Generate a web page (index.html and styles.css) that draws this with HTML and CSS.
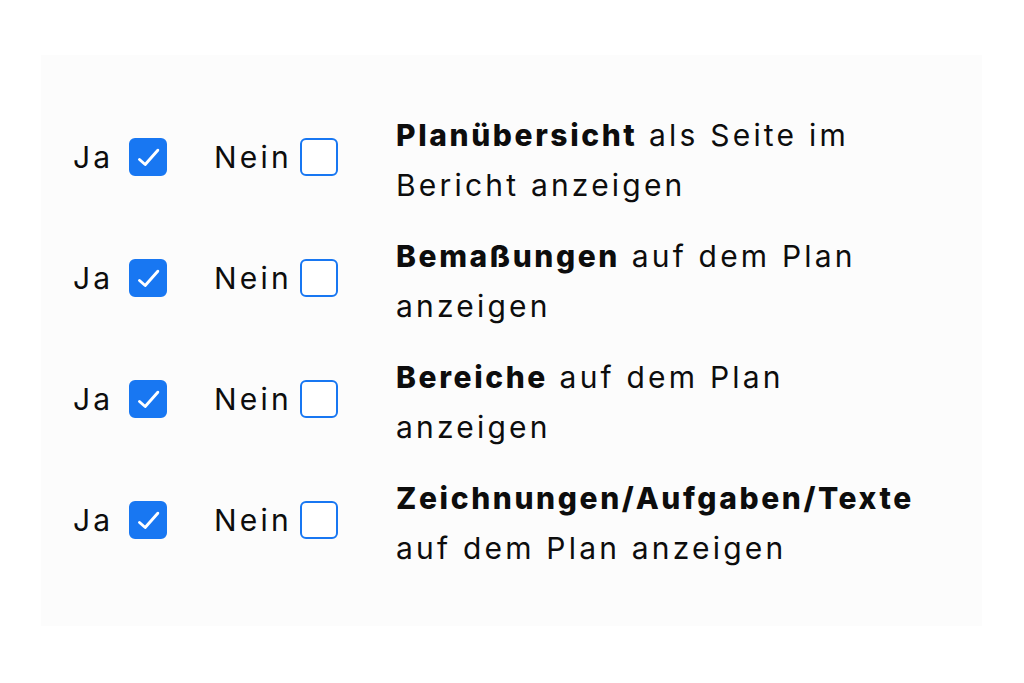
FILE: index.html
```html
<!DOCTYPE html>
<html lang="de">
<head>
    <meta charset="UTF-8">
    <title>Planoptionen</title>
    <link rel="stylesheet" href="styles.css">
</head>
<body>
    <div class="options-panel">
        <div class="option-row">
            <div class="choice yes">
                <span class="choice-label">Ja</span>
                <span class="box checked"><svg viewBox="0 0 33 33"><path d="M7.5 18.5l5.7 5 12.6-14.3"/></svg></span>
            </div>
            <div class="choice no">
                <span class="choice-label">Nein</span>
                <span class="box"></span>
            </div>
            <p class="option-text"><strong>Planübersicht</strong> als Seite im<br>Bericht anzeigen</p>
        </div>

        <div class="option-row">
            <div class="choice yes">
                <span class="choice-label">Ja</span>
                <span class="box checked"><svg viewBox="0 0 33 33"><path d="M7.5 18.5l5.7 5 12.6-14.3"/></svg></span>
            </div>
            <div class="choice no">
                <span class="choice-label">Nein</span>
                <span class="box"></span>
            </div>
            <p class="option-text"><strong>Bemaßungen</strong> auf dem Plan<br>anzeigen</p>
        </div>

        <div class="option-row">
            <div class="choice yes">
                <span class="choice-label">Ja</span>
                <span class="box checked"><svg viewBox="0 0 33 33"><path d="M7.5 18.5l5.7 5 12.6-14.3"/></svg></span>
            </div>
            <div class="choice no">
                <span class="choice-label">Nein</span>
                <span class="box"></span>
            </div>
            <p class="option-text"><strong>Bereiche</strong> auf dem Plan<br>anzeigen</p>
        </div>

        <div class="option-row">
            <div class="choice yes">
                <span class="choice-label">Ja</span>
                <span class="box checked"><svg viewBox="0 0 33 33"><path d="M7.5 18.5l5.7 5 12.6-14.3"/></svg></span>
            </div>
            <div class="choice no">
                <span class="choice-label">Nein</span>
                <span class="box"></span>
            </div>
            <p class="option-text"><strong>Zeichnungen/Aufgaben/Texte</strong><br>auf dem Plan anzeigen</p>
        </div>
    </div>
</body>
</html>
```

FILE: styles.css
```css
* {
    margin: 0;
    padding: 0;
    box-sizing: border-box;
}

body {
    font-family: Inter, "Open Sans", sans-serif;
    background: #ffffff;
    color: #0d0d0d;
    padding: 55px 42px 57px 41px;
}

.options-panel {
    background: #fcfcfc;
    padding: 55px 30px 53px 32px;
    display: flex;
    flex-direction: column;
    gap: 21px;
}

.option-row {
    display: flex;
    align-items: center;
}

.choice {
    display: flex;
    align-items: center;
    font-size: 30px;
    letter-spacing: 3.2px;
    margin-top: -6px;
}

.choice.yes {
    margin-right: 47px;
}

.choice.yes .choice-label {
    width: 56px;
}

.choice.no {
    margin-right: 58px;
}

.choice.no .choice-label {
    width: 86px;
}

.choice-label {
    line-height: 40px;
}

.box {
    width: 38px;
    height: 38px;
    border-radius: 6px;
    border: 2.5px solid #1877f2;
    background: #fff;
    display: flex;
    align-items: center;
    justify-content: center;
}

.box.checked {
    background: #1877f2;
}

.box svg {
    width: 33px;
    height: 33px;
    fill: none;
    stroke: #fff;
    stroke-width: 2.9;
    stroke-linecap: round;
    stroke-linejoin: round;
}

.option-text {
    font-size: 30px;
    line-height: 50px;
    letter-spacing: 3.2px;
    white-space: nowrap;
}

.option-text strong {
    font-weight: 800;
    letter-spacing: 2.6px;
}
```
